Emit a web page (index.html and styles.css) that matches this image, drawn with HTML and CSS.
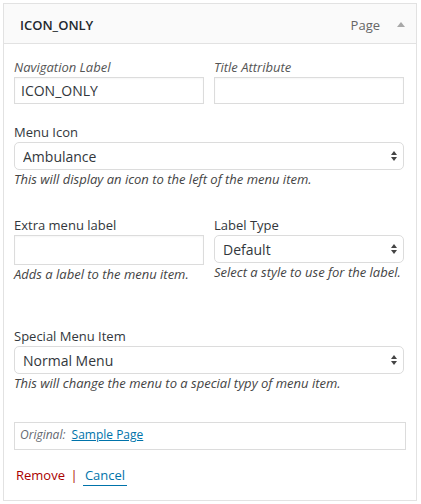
FILE: index.html
```html
<!DOCTYPE html>
<html lang="en">
<head>
    <meta charset="UTF-8">
    <meta name="viewport" content="width=device-width, initial-scale=1.0">
    <title>Menu Item</title>
    <link rel="stylesheet" href="styles.css">
</head>
<body>
    <div class="menu-item">
        <div class="item-bar">
            <span class="item-title">ICON_ONLY</span>
            <span class="item-controls">
                <span class="item-type">Page</span>
                <span class="item-toggle"></span>
            </span>
        </div>

        <div class="item-settings">
            <div class="row row-first">
                <div class="field">
                    <label class="label-em" for="navLabel">Navigation Label</label>
                    <input type="text" id="navLabel" class="text-input" value="ICON_ONLY">
                </div>
                <div class="field">
                    <label class="label-em" for="titleAttr">Title Attribute</label>
                    <input type="text" id="titleAttr" class="text-input">
                </div>
            </div>

            <div class="row row-icon">
                <div class="field wide">
                    <label for="menuIcon">Menu Icon</label>
                    <span class="select-wrap">
                        <select id="menuIcon"><option>Ambulance</option></select>
                    </span>
                    <span class="description">This will display an icon to the left of the menu item.</span>
                </div>
            </div>

            <div class="row row-extra">
                <div class="field">
                    <label for="extraLabel">Extra menu label</label>
                    <input type="text" id="extraLabel" class="text-input tall">
                    <span class="description">Adds a label to the menu item.</span>
                </div>
                <div class="field">
                    <label for="labelType">Label Type</label>
                    <span class="select-wrap">
                        <select id="labelType"><option>Default</option></select>
                    </span>
                    <span class="description">Select a style to use for the label.</span>
                </div>
            </div>

            <div class="row row-special">
                <div class="field wide">
                    <label for="specialItem">Special Menu Item</label>
                    <span class="select-wrap">
                        <select id="specialItem"><option>Normal Menu</option></select>
                    </span>
                    <span class="description">This will change the menu to a special typy of menu item.</span>
                </div>
            </div>

            <p class="link-to-original">Original: <a href="#">Sample Page</a></p>

            <div class="item-actions">
                <a href="#" class="item-delete">Remove</a>
                <span class="sep">|</span>
                <a href="#" class="item-cancel">Cancel</a>
            </div>
        </div>
    </div>
</body>
</html>
```

FILE: styles.css
```css
body {
    margin: 0;
    padding: 3px;
    background: #fff;
    font-family: "Open Sans", "Liberation Sans", sans-serif;
    font-size: 13px;
    line-height: 18px;
    color: #32373c;
}
.menu-item {
    width: 414px;
    box-sizing: border-box;
    border: 1px solid #e2e2e2;
}
.item-bar {
    height: 37px;
    display: flex;
    align-items: center;
    justify-content: space-between;
    padding: 2px 11px 0 16px;
    background: #fafafa;
    border-bottom: 1px solid #e2e2e2;
}
.item-title {
    font-weight: 600;
    font-size: 13px;
    color: #23282d;
}
.item-controls {
    display: flex;
    align-items: center;
}
.item-type {
    color: #666;
    font-size: 13px;
}
.item-toggle {
    width: 0;
    height: 0;
    margin-left: 17px;
    border-left: 4px solid transparent;
    border-right: 4px solid transparent;
    border-bottom: 5px solid #a8a8a8;
}
.item-settings {
    padding: 14px 10px 16px 10px;
}
.row {
    display: flex;
    gap: 10px;
}
.row-icon {
    margin-top: 19px;
}
.row-extra {
    margin-top: 28px;
}
.row-special {
    margin-top: 44px;
}
.field {
    width: 190px;
    display: flex;
    flex-direction: column;
}
.field.wide {
    width: 390px;
}
label {
    display: block;
    margin-bottom: 1px;
    color: #32373c;
}
.label-em {
    font-style: italic;
    color: #555;
}
.text-input {
    height: 27px;
    box-sizing: border-box;
    margin: 0;
    padding: 0 6px;
    border: 1px solid #dcdcdc;
    border-radius: 0;
    font-family: inherit;
    font-size: 14px;
    color: #32373c;
    box-shadow: inset 0 1px 2px rgba(0,0,0,0.04);
}
.text-input.tall {
    height: 30px;
}
.select-wrap {
    position: relative;
    display: block;
}
.select-wrap::before,
.select-wrap::after {
    content: "";
    position: absolute;
    right: 7px;
    width: 0;
    height: 0;
    border-left: 3px solid transparent;
    border-right: 3px solid transparent;
    pointer-events: none;
}
.select-wrap::before {
    top: 9px;
    border-bottom: 4px solid #444;
}
.select-wrap::after {
    top: 15px;
    border-top: 4px solid #444;
}
select {
    -webkit-appearance: none;
    appearance: none;
    display: block;
    width: 100%;
    height: 28px;
    margin: 0;
    padding: 0 8px;
    border: 1px solid #dcdcdc;
    border-radius: 5px;
    background: #fff;
    font-family: inherit;
    font-size: 14px;
    color: #32373c;
}
.description {
    display: block;
    font-style: italic;
    color: #444;
}
.link-to-original {
    margin: 30px 0 0 0;
    padding: 3px 5px 5px;
    border: 1px solid #dcdcdc;
    font-size: 12px;
    font-style: italic;
    color: #646970;
}
.link-to-original a {
    margin-left: 3px;
    font-style: normal;
    font-size: 12px;
    color: #0073aa;
}
.item-actions {
    margin-top: 16px;
    padding-left: 2px;
    font-size: 13px;
}
.item-actions a {
    text-decoration: none;
}
.item-delete {
    color: #a00;
}
.sep {
    color: #a00;
    margin: 0 2px;
}
.item-cancel {
    color: #0073aa;
    padding: 0 2px 1px;
    border-bottom: 1px solid #0073aa;
}
```
